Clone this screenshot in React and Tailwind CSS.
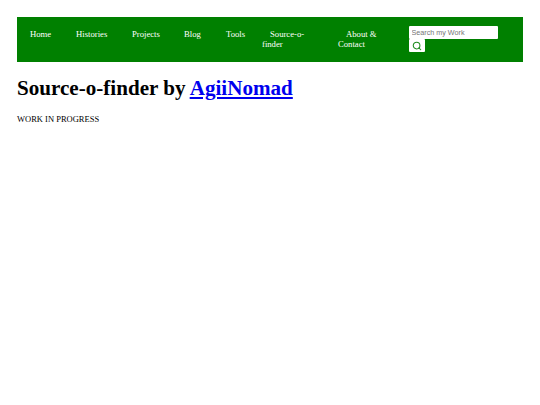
import { Search } from "lucide-react";

const items = [
  { label: "Home", w: "w-[29px]" },
  { label: "Histories", w: "w-[39px]" },
  { label: "Projects", w: "w-[35px]" },
  { label: "Blog", w: "w-[25px]" },
  { label: "Tools", w: "w-[27px]" },
  { label: "Source-o-finder", w: "w-[59px]" },
  { label: "About & Contact", w: "w-[54px]" },
];

export default function App() {
  return (
    <div className="min-h-[405px] bg-white p-[17px] font-['Liberation_Serif',serif] text-black">
      <nav className="flex h-[45px] items-start bg-[#008000] pl-[5px] pt-[9px]">
        <ul className="flex pt-[3px]">
          {items.map((item) => (
            <li
              key={item.label}
              className={`${item.w} mr-[17px] shrink-0 text-[8.67px] leading-[10px] text-white indent-[8px]`}
            >
              {item.label}
            </li>
          ))}
        </ul>
        <form className="flex flex-col items-start">
          <input
            readOnly
            placeholder="Search my Work"
            className="h-[13px] w-[89px] rounded-[1px] bg-white px-[2.5px] font-['Liberation_Sans',sans-serif] text-[7.2px] placeholder:text-[#757575] outline-none"
          />
          <button type="button" className="flex h-[13px] w-[16px] items-center justify-center rounded-[1px] bg-white text-[#1c8a1c]">
            <Search size={10} strokeWidth={2.5} />
          </button>
        </form>
      </nav>
      <h1 className="mt-[13px] text-[21.1px] font-bold leading-[26px]">
        Source-o-finder by <a href="#" className="text-[#0000ee] underline">AgiiNomad</a>
      </h1>
      <p className="mt-[13px] text-[8.5px] leading-[10px]">WORK IN PROGRESS</p>
    </div>
  );
}
